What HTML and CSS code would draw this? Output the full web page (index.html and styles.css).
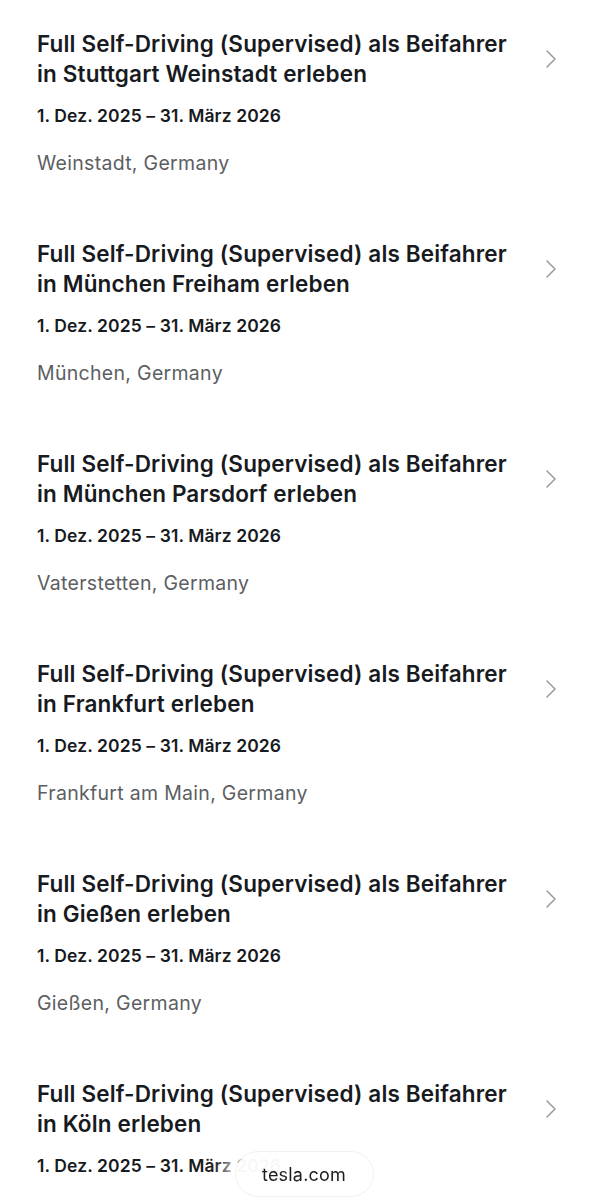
FILE: index.html
```html
<!DOCTYPE html>
<html lang="de">
<head>
<meta charset="utf-8">
<link rel="stylesheet" href="styles.css">
</head>
<body>
<ul class="list">
  <li class="item">
    <div class="text">
      <h2 class="title">Full Self-Driving (Supervised) als Beifahrer in Stuttgart Weinstadt erleben</h2>
      <p class="date">1. Dez. 2025 – 31. März 2026</p>
      <p class="place">Weinstadt, Germany</p>
    </div>
    <svg class="chev" viewBox="0 0 12 20"><path d="M2 2 L10 10 L2 18"/></svg>
  </li>
  <li class="item">
    <div class="text">
      <h2 class="title">Full Self-Driving (Supervised) als Beifahrer in München Freiham erleben</h2>
      <p class="date">1. Dez. 2025 – 31. März 2026</p>
      <p class="place">München, Germany</p>
    </div>
    <svg class="chev" viewBox="0 0 12 20"><path d="M2 2 L10 10 L2 18"/></svg>
  </li>
  <li class="item">
    <div class="text">
      <h2 class="title">Full Self-Driving (Supervised) als Beifahrer in München Parsdorf erleben</h2>
      <p class="date">1. Dez. 2025 – 31. März 2026</p>
      <p class="place">Vaterstetten, Germany</p>
    </div>
    <svg class="chev" viewBox="0 0 12 20"><path d="M2 2 L10 10 L2 18"/></svg>
  </li>
  <li class="item">
    <div class="text">
      <h2 class="title">Full Self-Driving (Supervised) als Beifahrer in Frankfurt erleben</h2>
      <p class="date">1. Dez. 2025 – 31. März 2026</p>
      <p class="place">Frankfurt am Main, Germany</p>
    </div>
    <svg class="chev" viewBox="0 0 12 20"><path d="M2 2 L10 10 L2 18"/></svg>
  </li>
  <li class="item">
    <div class="text">
      <h2 class="title">Full Self-Driving (Supervised) als Beifahrer in Gießen erleben</h2>
      <p class="date">1. Dez. 2025 – 31. März 2026</p>
      <p class="place">Gießen, Germany</p>
    </div>
    <svg class="chev" viewBox="0 0 12 20"><path d="M2 2 L10 10 L2 18"/></svg>
  </li>
  <li class="item last">
    <div class="text">
      <h2 class="title">Full Self-Driving (Supervised) als Beifahrer in Köln erleben</h2>
      <p class="date">1. Dez. 2025 – 31. März 2026</p>
    </div>
    <svg class="chev" viewBox="0 0 12 20"><path d="M2 2 L10 10 L2 18"/></svg>
  </li>
</ul>
<div class="bottombar">
  <div class="urlpill">tesla.com</div>
</div>
</body>
</html>
```
FILE: styles.css
```css
* { box-sizing: border-box; }
html, body {
  margin: 0;
  padding: 0;
  background: #ffffff;
  font-family: Inter, "Noto Sans", "Liberation Sans", sans-serif;
  color: #171a20;
  overflow: hidden;
  height: 1200px;
}
.list {
  list-style: none;
  margin: 0;
  padding: 29px 0 0 37px;
}
.item {
  display: flex;
  align-items: flex-start;
  height: 210px;
}
.item.last {
  height: 140px;
}
.text {
  width: 484px;
  flex: none;
}
.title {
  margin: 0;
  width: 478px;
  font-size: 22.5px;
  font-weight: 600;
  line-height: 30px;
  letter-spacing: 0.15px;
  color: #171a20;
}
.date {
  margin: 14px 0 0;
  font-size: 17.5px;
  line-height: 26px;
  font-weight: 600;
  letter-spacing: 0.1px;
  color: #171a20;
}
.place {
  margin: 20px 0 0;
  font-size: 19.5px;
  line-height: 28px;
  font-weight: 400;
  letter-spacing: 0.3px;
  color: #5c5e62;
}
.chev {
  width: 12px;
  height: 20px;
  margin: 20px 0 0 24px;
  fill: none;
  stroke: #98989d;
  stroke-width: 1.5;
  stroke-linecap: round;
  stroke-linejoin: round;
}
.bottombar {
  position: fixed;
  left: 0;
  right: 0;
  bottom: 0;
  height: 70px;
  display: flex;
  justify-content: center;
  align-items: flex-start;
  padding: 21px 0 0 2px;
}
.urlpill {
  width: 139px;
  height: 46px;
  border-radius: 23px;
  background: rgba(255,255,255,0.97);
  border: 1px solid rgba(0,0,0,0.05);
  box-shadow: 0 0 18px 10px rgba(255,255,255,0.9);
  display: flex;
  align-items: center;
  justify-content: center;
  font-size: 18px;
  color: #1c1c1e;
  letter-spacing: 0.2px;
}
```
